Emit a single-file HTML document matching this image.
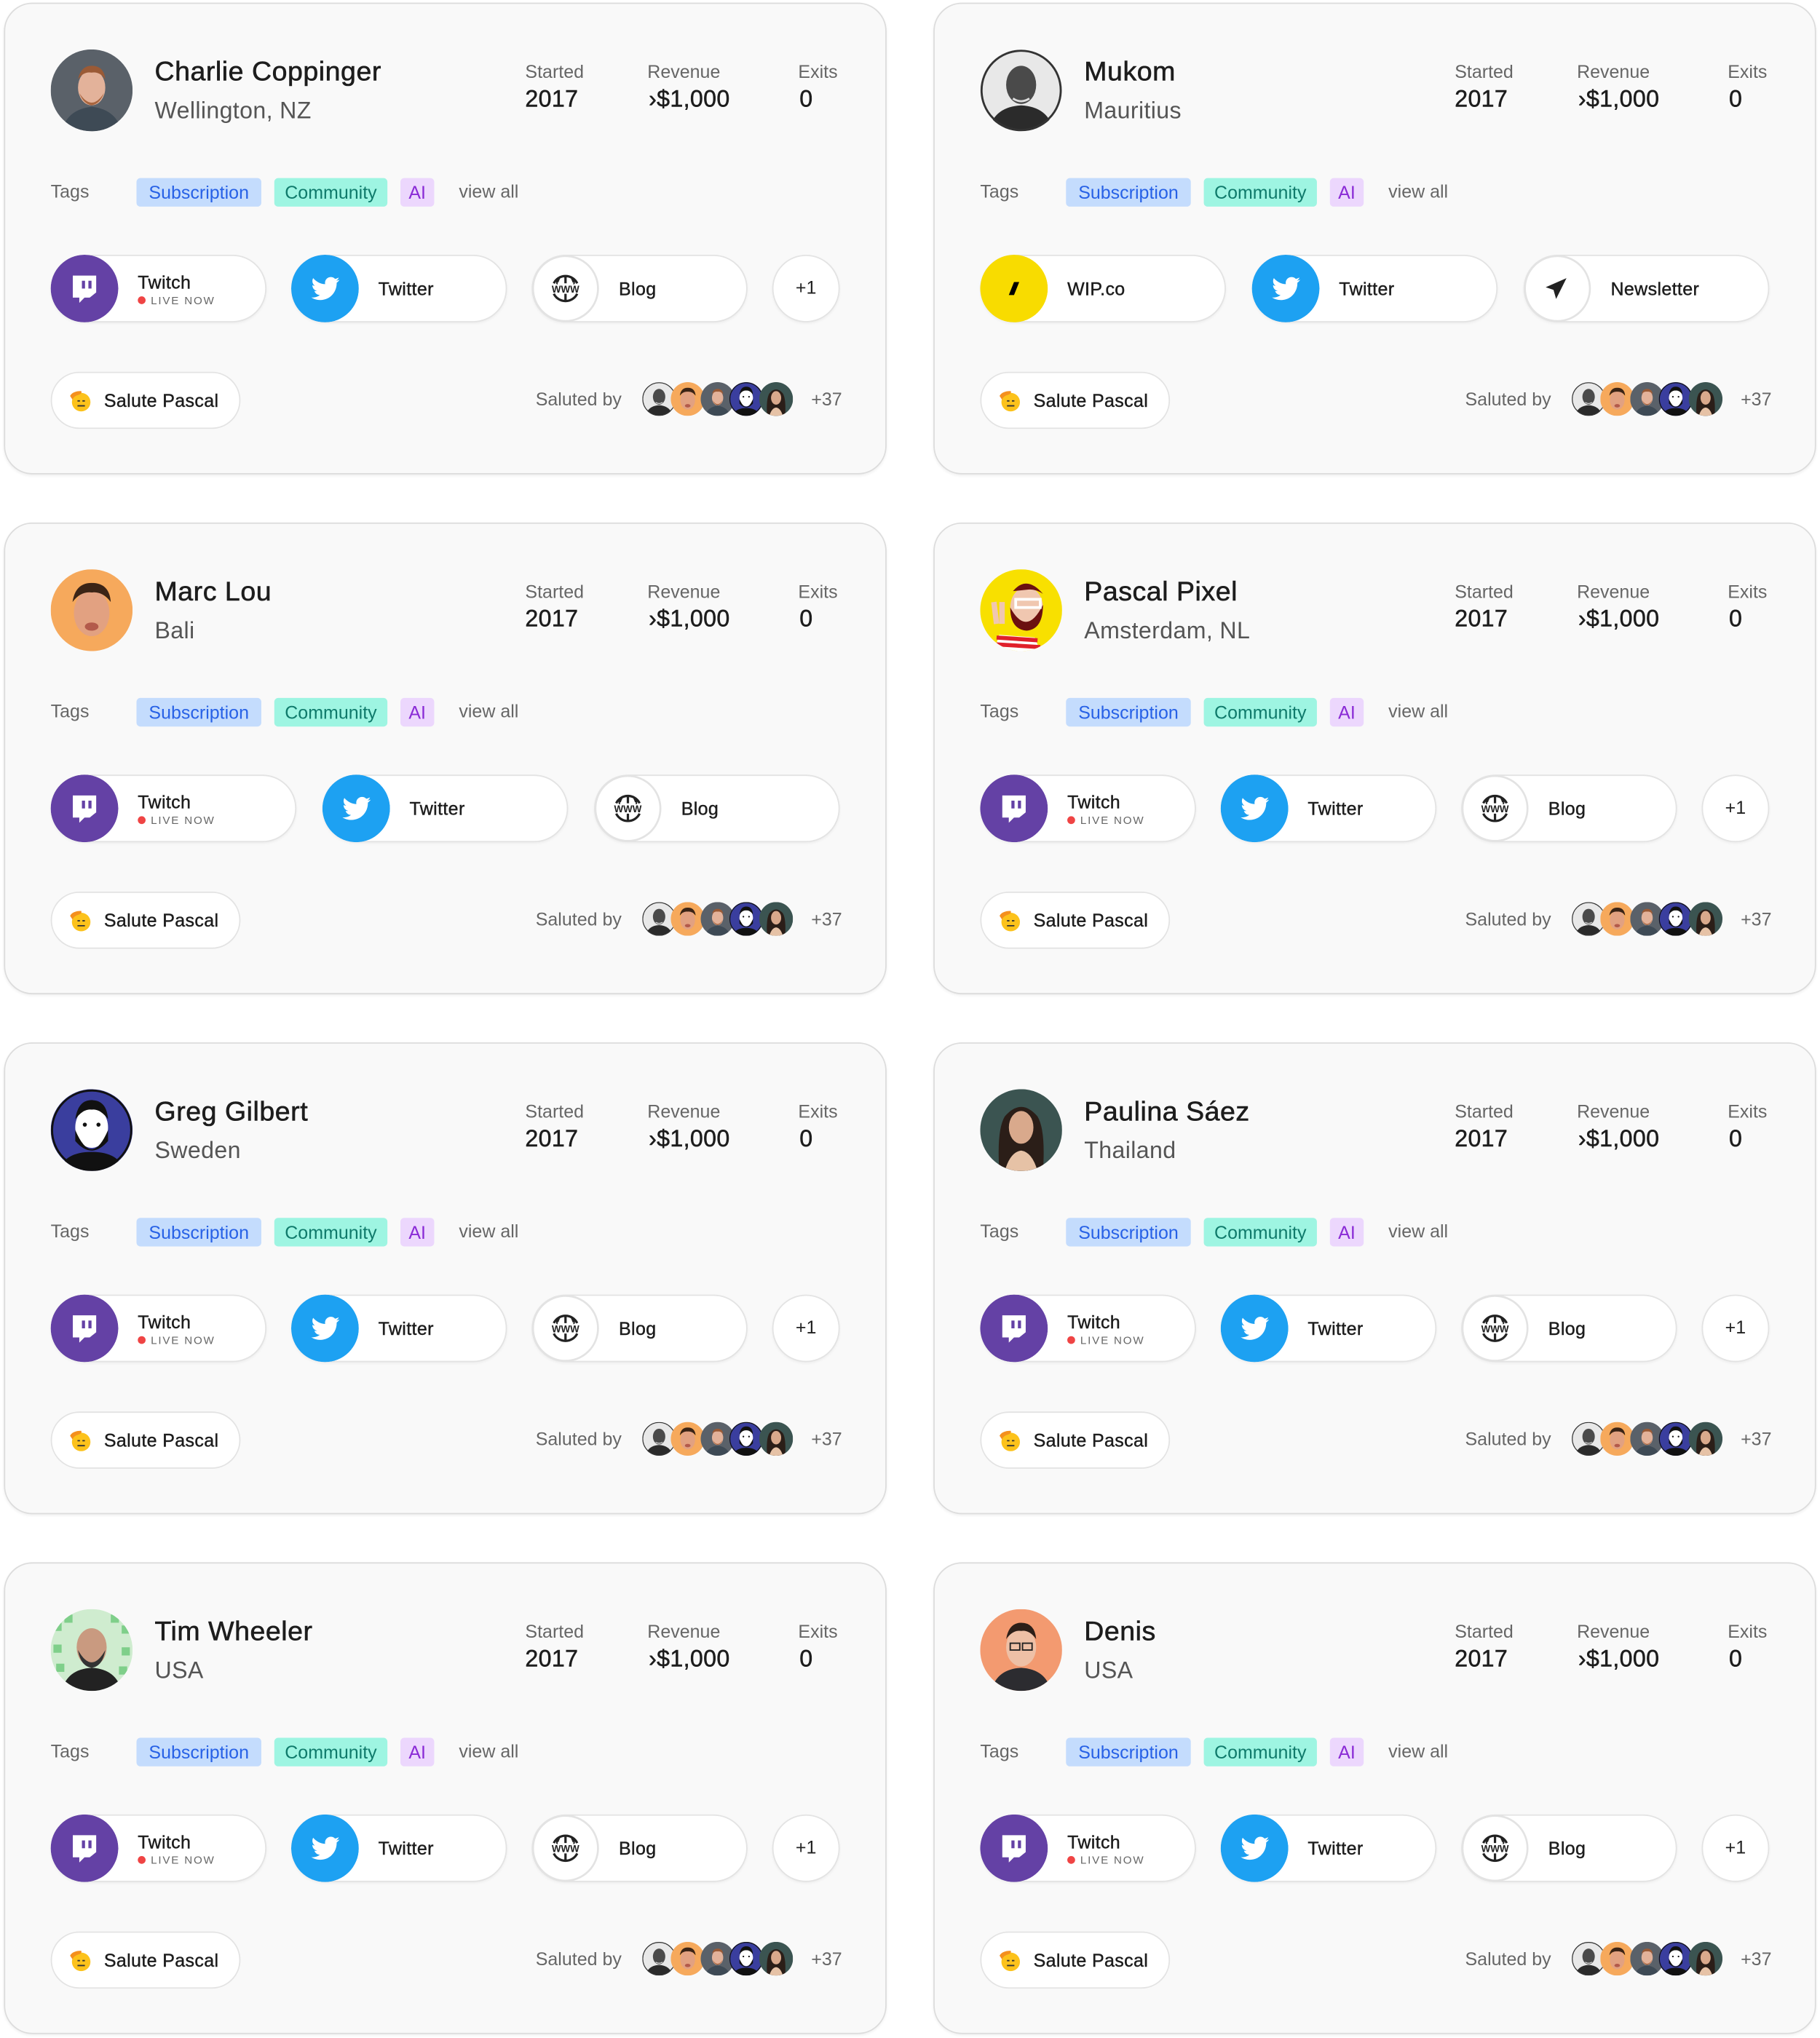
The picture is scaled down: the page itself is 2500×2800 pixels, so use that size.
<!DOCTYPE html>
<html><head><meta charset="utf-8">
<style>
*{box-sizing:border-box;margin:0;padding:0}
html,body{width:2500px;height:2800px;background:#fff;overflow:hidden}
#stage{position:absolute;left:0;top:0;width:1400px;height:1568px;transform:scale(1.785714);transform-origin:0 0;font-family:"Liberation Sans",Arial,sans-serif;color:#222}
.card{position:absolute;width:679px;height:363px;border:1.5px solid #dcdcdc;border-radius:22px;background:#f9f9f9;box-shadow:0 1px 2px rgba(0,0,0,.06)}
.card>*{position:absolute}
.av{left:35px;top:35px;width:63px;height:63px}
.name{left:115px;top:41px;font-size:21px;line-height:24px;color:#1d1d1d;letter-spacing:.3px;-webkit-text-stroke:.35px #1d1d1d}
.loc{left:115px;top:71px;font-size:18px;line-height:22px;color:#555;letter-spacing:.2px}
.lb{top:44px;font-size:14px;line-height:16px;color:#666}
.vl{top:62px;font-size:18px;line-height:22px;color:#1d1d1d;-webkit-text-stroke:.3px #1d1d1d;letter-spacing:.2px}
.tg{top:135.5px;font-size:14px;line-height:16px;color:#666}
.chip{top:133.5px;height:22px;border-radius:3px;font-size:14px;line-height:22px;text-align:center}
.c1{background:#c4dcfd;color:#2761e6;width:96px}
.c2{background:#9ef5e2;color:#0f7a6b;width:87px}
.c3{background:#ecd7fd;color:#8a2bd6;width:26px}
.pill{top:193px;height:52px;background:#fff;border:1.5px solid #e3e3e3;border-radius:26px;box-shadow:0 1px 2px rgba(0,0,0,.05)}
.pill .ic{position:absolute;left:-1.5px;top:-1.5px;width:52px;height:52px;border-radius:50%}
.pill .t{position:absolute;left:66px;top:17px;font-size:14px;line-height:16px;color:#1d1d1d;-webkit-text-stroke:.25px #1d1d1d;letter-spacing:.2px}
.pill .t2{top:12px}
.pill .ln{position:absolute;left:66px;top:29px;font-size:8.5px;line-height:10px;color:#666;letter-spacing:1px}
.pill .ln i{display:inline-block;width:6px;height:6px;border-radius:50%;background:#ef4444;margin-right:4px;vertical-align:0}
.plus{width:52px;text-align:center;line-height:49px;font-size:14px;color:#222}
.sal{left:35px;top:283px;width:146px;height:44px;background:#fff;border:1.5px solid #e3e3e3;border-radius:22px}
.sal svg{position:absolute;left:12px;top:11px;width:19px;height:19px}
.sal span{position:absolute;left:40px;top:13px;font-size:14px;line-height:16px;color:#1d1d1d;-webkit-text-stroke:.25px #1d1d1d;letter-spacing:.2px}
.sb{left:408px;top:296px;font-size:14px;line-height:16px;color:#666}
.mini{top:291px;width:26px;height:26px}
.p37{left:620px;top:296px;font-size:14px;line-height:16px;color:#666}
</style></head><body>
<svg width="0" height="0" style="position:absolute">
<defs>
<clipPath id="cc"><circle cx="30" cy="30" r="30"/></clipPath>
<symbol id="charlie" viewBox="0 0 60 60"><g clip-path="url(#cc)"><rect width="60" height="60" fill="#5a6169"/><path d="M8 60 Q12 44 30 42 Q48 44 52 60Z" fill="#3e4a55"/><ellipse cx="30" cy="28" rx="10" ry="13" fill="#e3b29a"/><path d="M20 22 Q22 12 30 12 Q39 12 40 22 Q36 16 30 17 Q24 16 20 22Z" fill="#9a5a36"/><path d="M21 32 Q30 46 39 32 Q36 40 30 41 Q24 40 21 32Z" fill="#a8653e"/></g></symbol>
<symbol id="mukom" viewBox="0 0 60 60"><g clip-path="url(#cc)"><rect width="60" height="60" fill="#e8e8e8"/><path d="M6 60 Q10 42 30 41 Q50 42 54 60Z" fill="#2b2b2b"/><ellipse cx="30" cy="26" rx="11" ry="14" fill="#4a4a4a"/><path d="M24 36 Q30 40 36 36" stroke="#ddd" stroke-width="1.5" fill="none"/></g><circle cx="30" cy="30" r="29" fill="none" stroke="#333" stroke-width="1.5"/></symbol>
<symbol id="marc" viewBox="0 0 60 60"><g clip-path="url(#cc)"><rect width="60" height="60" fill="#f6a95c"/><ellipse cx="30" cy="32" rx="13" ry="17" fill="#e2a181"/><path d="M16 24 Q18 10 30 10 Q43 10 44 24 Q38 16 30 17 Q22 16 16 24Z" fill="#3b2416"/><ellipse cx="30" cy="42" rx="5" ry="3" fill="#b35a4b"/></g></symbol>
<symbol id="pascal" viewBox="0 0 60 60"><g clip-path="url(#cc)"><rect width="60" height="60" fill="#f8e000"/><path d="M10 60 L14 48 L40 50 L44 60Z" fill="#fff"/><path d="M12 50 L42 52 M12 55 L44 57" stroke="#e0202a" stroke-width="3"/><ellipse cx="34" cy="28" rx="12" ry="15" fill="#f0c7b0"/><path d="M22 28 Q34 50 46 26 Q46 44 34 45 Q22 44 22 28Z" fill="#6b1010"/><path d="M24 16 Q34 4 46 18 Q40 14 34 15 Z" fill="#6b1010"/><path d="M12 40 L10 24 M16 40 L16 24" stroke="#f0c7b0" stroke-width="4"/><rect x="26" y="22" width="18" height="6" fill="none" stroke="#fff" stroke-width="2"/></g></symbol>
<symbol id="greg" viewBox="0 0 60 60"><g clip-path="url(#cc)"><rect width="60" height="60" fill="#3a3e9e"/><path d="M6 60 Q10 46 30 46 Q50 46 54 60Z" fill="#111"/><ellipse cx="30" cy="28" rx="12" ry="15" fill="#fff"/><path d="M18 30 Q30 58 42 30 L42 38 Q30 52 18 38Z" fill="#111"/><path d="M18 22 Q20 8 30 8 Q41 8 42 22 Q36 14 30 15 Q24 14 18 22Z" fill="#111"/><circle cx="25" cy="26" r="1.5" fill="#111"/><circle cx="35" cy="26" r="1.5" fill="#111"/></g><circle cx="30" cy="30" r="29" fill="none" stroke="#111" stroke-width="1.5"/></symbol>
<symbol id="paulina" viewBox="0 0 60 60"><g clip-path="url(#cc)"><rect width="60" height="60" fill="#3b5451"/><path d="M14 60 Q12 30 18 20 Q30 6 42 20 Q48 30 46 60Z" fill="#2b1e18"/><ellipse cx="30" cy="28" rx="9" ry="12" fill="#d9a98c"/><path d="M18 60 Q22 46 30 45 Q38 46 42 60Z" fill="#e6c2a6"/></g></symbol>
<symbol id="tim" viewBox="0 0 60 60"><g clip-path="url(#cc)"><rect width="60" height="60" fill="#cfeccf"/><g fill="#7fcf8a"><rect x="2" y="10" width="6" height="6"/><rect x="10" y="4" width="6" height="6"/><rect x="44" y="4" width="6" height="6"/><rect x="52" y="12" width="6" height="6"/><rect x="2" y="26" width="6" height="6"/><rect x="52" y="28" width="6" height="6"/><rect x="4" y="40" width="6" height="6"/><rect x="50" y="42" width="6" height="6"/></g><path d="M8 60 Q12 44 30 43 Q48 44 52 60Z" fill="#222"/><ellipse cx="30" cy="28" rx="11" ry="14" fill="#c99a80"/><path d="M20 30 Q30 48 40 30 Q38 42 30 43 Q22 42 20 30Z" fill="#333"/></g></symbol>
<symbol id="denis" viewBox="0 0 60 60"><g clip-path="url(#cc)"><rect width="60" height="60" fill="#f39a70"/><path d="M8 60 Q12 44 30 43 Q48 44 52 60Z" fill="#2c2c30"/><ellipse cx="30" cy="28" rx="11" ry="14" fill="#eec0a6"/><path d="M19 22 Q21 10 30 10 Q40 10 41 22 Q36 15 30 16 Q24 15 19 22Z" fill="#2d1f18"/><rect x="22" y="25" width="7" height="5" fill="none" stroke="#222" stroke-width="1"/><rect x="31" y="25" width="7" height="5" fill="none" stroke="#222" stroke-width="1"/></g></symbol>
<symbol id="twitch" viewBox="0 0 52 52"><circle cx="26" cy="26" r="26" fill="#6441a5"/><path d="M17 16 H35 V29 L30 33 H26 L22 37 V33 H17Z" fill="#fff"/><rect x="24" y="20" width="2.4" height="6" fill="#6441a5"/><rect x="29" y="20" width="2.4" height="6" fill="#6441a5"/></symbol>
<symbol id="tw" viewBox="0 0 52 52"><circle cx="26" cy="26" r="26" fill="#1da1f2"/><g transform="translate(14.5 14.5) scale(0.96)"><path fill="#fff" d="M23.643 4.937c-.835.37-1.732.62-2.675.733.962-.576 1.7-1.49 2.048-2.578-.9.534-1.897.922-2.958 1.130-.85-.904-2.06-1.47-3.4-1.47-2.572 0-4.658 2.086-4.658 4.66 0 .364.042.718.12 1.06-3.873-.195-7.304-2.05-9.602-4.868-.4.69-.63 1.49-.63 2.342 0 1.616.823 3.043 2.072 3.878-.764-.025-1.482-.234-2.11-.583v.06c0 2.257 1.605 4.14 3.737 4.568-.392.106-.803.162-1.227.162-.3 0-.593-.028-.877-.082.593 1.85 2.313 3.198 4.352 3.234-1.595 1.25-3.604 1.995-5.786 1.995-.376 0-.747-.022-1.112-.065 2.062 1.323 4.51 2.093 7.14 2.093 8.57 0 13.255-7.098 13.255-13.254 0-.2-.005-.402-.014-.602.91-.658 1.7-1.477 2.323-2.41z"/></g></symbol>
<symbol id="www" viewBox="0 0 52 52"><circle cx="26" cy="26" r="25" fill="#fff" stroke="#e3e3e3" stroke-width="1.5"/><path d="M17 22 A10 10 0 0 1 35 22 M17 30 A10 10 0 0 0 35 30 M26 16 V22 M26 30 V36 M21 18 Q19 22 20 22 M31 18 Q33 22 32 22" stroke="#222" stroke-width="1.8" fill="none"/><text x="26" y="29" font-family="Liberation Sans" font-size="7.5" font-weight="bold" text-anchor="middle" fill="#222">WWW</text></symbol>
<symbol id="wip" viewBox="0 0 52 52"><circle cx="26" cy="26" r="26" fill="#f8dc00"/><path d="M26 21 H30 L26 31 H22Z" fill="#000"/></symbol>
<symbol id="plane" viewBox="0 0 52 52"><circle cx="26" cy="26" r="25" fill="#fff" stroke="#e3e3e3" stroke-width="1.5"/><path d="M33 18 L17 25 L23 27 L25 34Z" fill="#222"/></symbol>
<symbol id="salute" viewBox="0 0 20 20"><circle cx="11" cy="12" r="7.5" fill="#fcc21b"/><path d="M2 7 Q4 3 11 3 Q12 5 9 6 Q5 7 4 10Z" fill="#f4901e"/><path d="M8 11 H10 M12 11 H14 M8 15 H14" stroke="#333" stroke-width="1.1"/></symbol>
</defs></svg>
<div id="stage">

<div class="card" style="left:3px;top:2px">
<svg class="av"><use href="#charlie"/></svg>
<div class="name">Charlie Coppinger</div><div class="loc">Wellington, NZ</div>
<div class="lb" style="left:400px">Started</div><div class="vl" style="left:400px">2017</div>
<div class="lb" style="left:494px">Revenue</div><div class="vl" style="left:495px">›$1,000</div>
<div class="lb" style="left:610px">Exits</div><div class="vl" style="left:611px">0</div>
<div class="tg" style="left:35px">Tags</div>
<div class="chip c1" style="left:101px">Subscription</div><div class="chip c2" style="left:207px">Community</div><div class="chip c3" style="left:304px">AI</div>
<div class="tg" style="left:349px">view all</div>
<div class="pill" style="left:35px;width:166px"><svg class="ic"><use href="#twitch"/></svg><div class="t t2">Twitch</div><div class="ln"><i></i>LIVE NOW</div></div>
<div class="pill" style="left:220px;width:166px"><svg class="ic"><use href="#tw"/></svg><div class="t">Twitter</div></div>
<div class="pill" style="left:405px;width:166px"><svg class="ic"><use href="#www"/></svg><div class="t">Blog</div></div>
<div class="pill plus" style="left:590px">+1</div>
<div class="sal"><svg><use href="#salute"/></svg><span>Salute Pascal</span></div>
<div class="sb">Saluted by</div>
<svg class="mini" style="left:490px"><use href="#mukom"/></svg><svg class="mini" style="left:512px"><use href="#marc"/></svg><svg class="mini" style="left:535px"><use href="#charlie"/></svg><svg class="mini" style="left:557px"><use href="#greg"/></svg><svg class="mini" style="left:580px"><use href="#paulina"/></svg>
<div class="p37">+37</div>
</div>

<div class="card" style="left:718px;top:2px">
<svg class="av"><use href="#mukom"/></svg>
<div class="name">Mukom</div><div class="loc">Mauritius</div>
<div class="lb" style="left:400px">Started</div><div class="vl" style="left:400px">2017</div>
<div class="lb" style="left:494px">Revenue</div><div class="vl" style="left:495px">›$1,000</div>
<div class="lb" style="left:610px">Exits</div><div class="vl" style="left:611px">0</div>
<div class="tg" style="left:35px">Tags</div>
<div class="chip c1" style="left:101px">Subscription</div><div class="chip c2" style="left:207px">Community</div><div class="chip c3" style="left:304px">AI</div>
<div class="tg" style="left:349px">view all</div>
<div class="pill" style="left:35px;width:189px"><svg class="ic"><use href="#wip"/></svg><div class="t">WIP.co</div></div>
<div class="pill" style="left:244px;width:189px"><svg class="ic"><use href="#tw"/></svg><div class="t">Twitter</div></div>
<div class="pill" style="left:453px;width:189px"><svg class="ic"><use href="#plane"/></svg><div class="t">Newsletter</div></div>
<div class="sal"><svg><use href="#salute"/></svg><span>Salute Pascal</span></div>
<div class="sb">Saluted by</div>
<svg class="mini" style="left:490px"><use href="#mukom"/></svg><svg class="mini" style="left:512px"><use href="#marc"/></svg><svg class="mini" style="left:535px"><use href="#charlie"/></svg><svg class="mini" style="left:557px"><use href="#greg"/></svg><svg class="mini" style="left:580px"><use href="#paulina"/></svg>
<div class="p37">+37</div>
</div>

<div class="card" style="left:3px;top:402px">
<svg class="av"><use href="#marc"/></svg>
<div class="name">Marc Lou</div><div class="loc">Bali</div>
<div class="lb" style="left:400px">Started</div><div class="vl" style="left:400px">2017</div>
<div class="lb" style="left:494px">Revenue</div><div class="vl" style="left:495px">›$1,000</div>
<div class="lb" style="left:610px">Exits</div><div class="vl" style="left:611px">0</div>
<div class="tg" style="left:35px">Tags</div>
<div class="chip c1" style="left:101px">Subscription</div><div class="chip c2" style="left:207px">Community</div><div class="chip c3" style="left:304px">AI</div>
<div class="tg" style="left:349px">view all</div>
<div class="pill" style="left:35px;width:189px"><svg class="ic"><use href="#twitch"/></svg><div class="t t2">Twitch</div><div class="ln"><i></i>LIVE NOW</div></div>
<div class="pill" style="left:244px;width:189px"><svg class="ic"><use href="#tw"/></svg><div class="t">Twitter</div></div>
<div class="pill" style="left:453px;width:189px"><svg class="ic"><use href="#www"/></svg><div class="t">Blog</div></div>
<div class="sal"><svg><use href="#salute"/></svg><span>Salute Pascal</span></div>
<div class="sb">Saluted by</div>
<svg class="mini" style="left:490px"><use href="#mukom"/></svg><svg class="mini" style="left:512px"><use href="#marc"/></svg><svg class="mini" style="left:535px"><use href="#charlie"/></svg><svg class="mini" style="left:557px"><use href="#greg"/></svg><svg class="mini" style="left:580px"><use href="#paulina"/></svg>
<div class="p37">+37</div>
</div>

<div class="card" style="left:718px;top:402px">
<svg class="av"><use href="#pascal"/></svg>
<div class="name">Pascal Pixel</div><div class="loc">Amsterdam, NL</div>
<div class="lb" style="left:400px">Started</div><div class="vl" style="left:400px">2017</div>
<div class="lb" style="left:494px">Revenue</div><div class="vl" style="left:495px">›$1,000</div>
<div class="lb" style="left:610px">Exits</div><div class="vl" style="left:611px">0</div>
<div class="tg" style="left:35px">Tags</div>
<div class="chip c1" style="left:101px">Subscription</div><div class="chip c2" style="left:207px">Community</div><div class="chip c3" style="left:304px">AI</div>
<div class="tg" style="left:349px">view all</div>
<div class="pill" style="left:35px;width:166px"><svg class="ic"><use href="#twitch"/></svg><div class="t t2">Twitch</div><div class="ln"><i></i>LIVE NOW</div></div>
<div class="pill" style="left:220px;width:166px"><svg class="ic"><use href="#tw"/></svg><div class="t">Twitter</div></div>
<div class="pill" style="left:405px;width:166px"><svg class="ic"><use href="#www"/></svg><div class="t">Blog</div></div>
<div class="pill plus" style="left:590px">+1</div>
<div class="sal"><svg><use href="#salute"/></svg><span>Salute Pascal</span></div>
<div class="sb">Saluted by</div>
<svg class="mini" style="left:490px"><use href="#mukom"/></svg><svg class="mini" style="left:512px"><use href="#marc"/></svg><svg class="mini" style="left:535px"><use href="#charlie"/></svg><svg class="mini" style="left:557px"><use href="#greg"/></svg><svg class="mini" style="left:580px"><use href="#paulina"/></svg>
<div class="p37">+37</div>
</div>

<div class="card" style="left:3px;top:802px">
<svg class="av"><use href="#greg"/></svg>
<div class="name">Greg Gilbert</div><div class="loc">Sweden</div>
<div class="lb" style="left:400px">Started</div><div class="vl" style="left:400px">2017</div>
<div class="lb" style="left:494px">Revenue</div><div class="vl" style="left:495px">›$1,000</div>
<div class="lb" style="left:610px">Exits</div><div class="vl" style="left:611px">0</div>
<div class="tg" style="left:35px">Tags</div>
<div class="chip c1" style="left:101px">Subscription</div><div class="chip c2" style="left:207px">Community</div><div class="chip c3" style="left:304px">AI</div>
<div class="tg" style="left:349px">view all</div>
<div class="pill" style="left:35px;width:166px"><svg class="ic"><use href="#twitch"/></svg><div class="t t2">Twitch</div><div class="ln"><i></i>LIVE NOW</div></div>
<div class="pill" style="left:220px;width:166px"><svg class="ic"><use href="#tw"/></svg><div class="t">Twitter</div></div>
<div class="pill" style="left:405px;width:166px"><svg class="ic"><use href="#www"/></svg><div class="t">Blog</div></div>
<div class="pill plus" style="left:590px">+1</div>
<div class="sal"><svg><use href="#salute"/></svg><span>Salute Pascal</span></div>
<div class="sb">Saluted by</div>
<svg class="mini" style="left:490px"><use href="#mukom"/></svg><svg class="mini" style="left:512px"><use href="#marc"/></svg><svg class="mini" style="left:535px"><use href="#charlie"/></svg><svg class="mini" style="left:557px"><use href="#greg"/></svg><svg class="mini" style="left:580px"><use href="#paulina"/></svg>
<div class="p37">+37</div>
</div>

<div class="card" style="left:718px;top:802px">
<svg class="av"><use href="#paulina"/></svg>
<div class="name">Paulina Sáez</div><div class="loc">Thailand</div>
<div class="lb" style="left:400px">Started</div><div class="vl" style="left:400px">2017</div>
<div class="lb" style="left:494px">Revenue</div><div class="vl" style="left:495px">›$1,000</div>
<div class="lb" style="left:610px">Exits</div><div class="vl" style="left:611px">0</div>
<div class="tg" style="left:35px">Tags</div>
<div class="chip c1" style="left:101px">Subscription</div><div class="chip c2" style="left:207px">Community</div><div class="chip c3" style="left:304px">AI</div>
<div class="tg" style="left:349px">view all</div>
<div class="pill" style="left:35px;width:166px"><svg class="ic"><use href="#twitch"/></svg><div class="t t2">Twitch</div><div class="ln"><i></i>LIVE NOW</div></div>
<div class="pill" style="left:220px;width:166px"><svg class="ic"><use href="#tw"/></svg><div class="t">Twitter</div></div>
<div class="pill" style="left:405px;width:166px"><svg class="ic"><use href="#www"/></svg><div class="t">Blog</div></div>
<div class="pill plus" style="left:590px">+1</div>
<div class="sal"><svg><use href="#salute"/></svg><span>Salute Pascal</span></div>
<div class="sb">Saluted by</div>
<svg class="mini" style="left:490px"><use href="#mukom"/></svg><svg class="mini" style="left:512px"><use href="#marc"/></svg><svg class="mini" style="left:535px"><use href="#charlie"/></svg><svg class="mini" style="left:557px"><use href="#greg"/></svg><svg class="mini" style="left:580px"><use href="#paulina"/></svg>
<div class="p37">+37</div>
</div>

<div class="card" style="left:3px;top:1202px">
<svg class="av"><use href="#tim"/></svg>
<div class="name">Tim Wheeler</div><div class="loc">USA</div>
<div class="lb" style="left:400px">Started</div><div class="vl" style="left:400px">2017</div>
<div class="lb" style="left:494px">Revenue</div><div class="vl" style="left:495px">›$1,000</div>
<div class="lb" style="left:610px">Exits</div><div class="vl" style="left:611px">0</div>
<div class="tg" style="left:35px">Tags</div>
<div class="chip c1" style="left:101px">Subscription</div><div class="chip c2" style="left:207px">Community</div><div class="chip c3" style="left:304px">AI</div>
<div class="tg" style="left:349px">view all</div>
<div class="pill" style="left:35px;width:166px"><svg class="ic"><use href="#twitch"/></svg><div class="t t2">Twitch</div><div class="ln"><i></i>LIVE NOW</div></div>
<div class="pill" style="left:220px;width:166px"><svg class="ic"><use href="#tw"/></svg><div class="t">Twitter</div></div>
<div class="pill" style="left:405px;width:166px"><svg class="ic"><use href="#www"/></svg><div class="t">Blog</div></div>
<div class="pill plus" style="left:590px">+1</div>
<div class="sal"><svg><use href="#salute"/></svg><span>Salute Pascal</span></div>
<div class="sb">Saluted by</div>
<svg class="mini" style="left:490px"><use href="#mukom"/></svg><svg class="mini" style="left:512px"><use href="#marc"/></svg><svg class="mini" style="left:535px"><use href="#charlie"/></svg><svg class="mini" style="left:557px"><use href="#greg"/></svg><svg class="mini" style="left:580px"><use href="#paulina"/></svg>
<div class="p37">+37</div>
</div>

<div class="card" style="left:718px;top:1202px">
<svg class="av"><use href="#denis"/></svg>
<div class="name">Denis</div><div class="loc">USA</div>
<div class="lb" style="left:400px">Started</div><div class="vl" style="left:400px">2017</div>
<div class="lb" style="left:494px">Revenue</div><div class="vl" style="left:495px">›$1,000</div>
<div class="lb" style="left:610px">Exits</div><div class="vl" style="left:611px">0</div>
<div class="tg" style="left:35px">Tags</div>
<div class="chip c1" style="left:101px">Subscription</div><div class="chip c2" style="left:207px">Community</div><div class="chip c3" style="left:304px">AI</div>
<div class="tg" style="left:349px">view all</div>
<div class="pill" style="left:35px;width:166px"><svg class="ic"><use href="#twitch"/></svg><div class="t t2">Twitch</div><div class="ln"><i></i>LIVE NOW</div></div>
<div class="pill" style="left:220px;width:166px"><svg class="ic"><use href="#tw"/></svg><div class="t">Twitter</div></div>
<div class="pill" style="left:405px;width:166px"><svg class="ic"><use href="#www"/></svg><div class="t">Blog</div></div>
<div class="pill plus" style="left:590px">+1</div>
<div class="sal"><svg><use href="#salute"/></svg><span>Salute Pascal</span></div>
<div class="sb">Saluted by</div>
<svg class="mini" style="left:490px"><use href="#mukom"/></svg><svg class="mini" style="left:512px"><use href="#marc"/></svg><svg class="mini" style="left:535px"><use href="#charlie"/></svg><svg class="mini" style="left:557px"><use href="#greg"/></svg><svg class="mini" style="left:580px"><use href="#paulina"/></svg>
<div class="p37">+37</div>
</div>

</div>
</body></html>
